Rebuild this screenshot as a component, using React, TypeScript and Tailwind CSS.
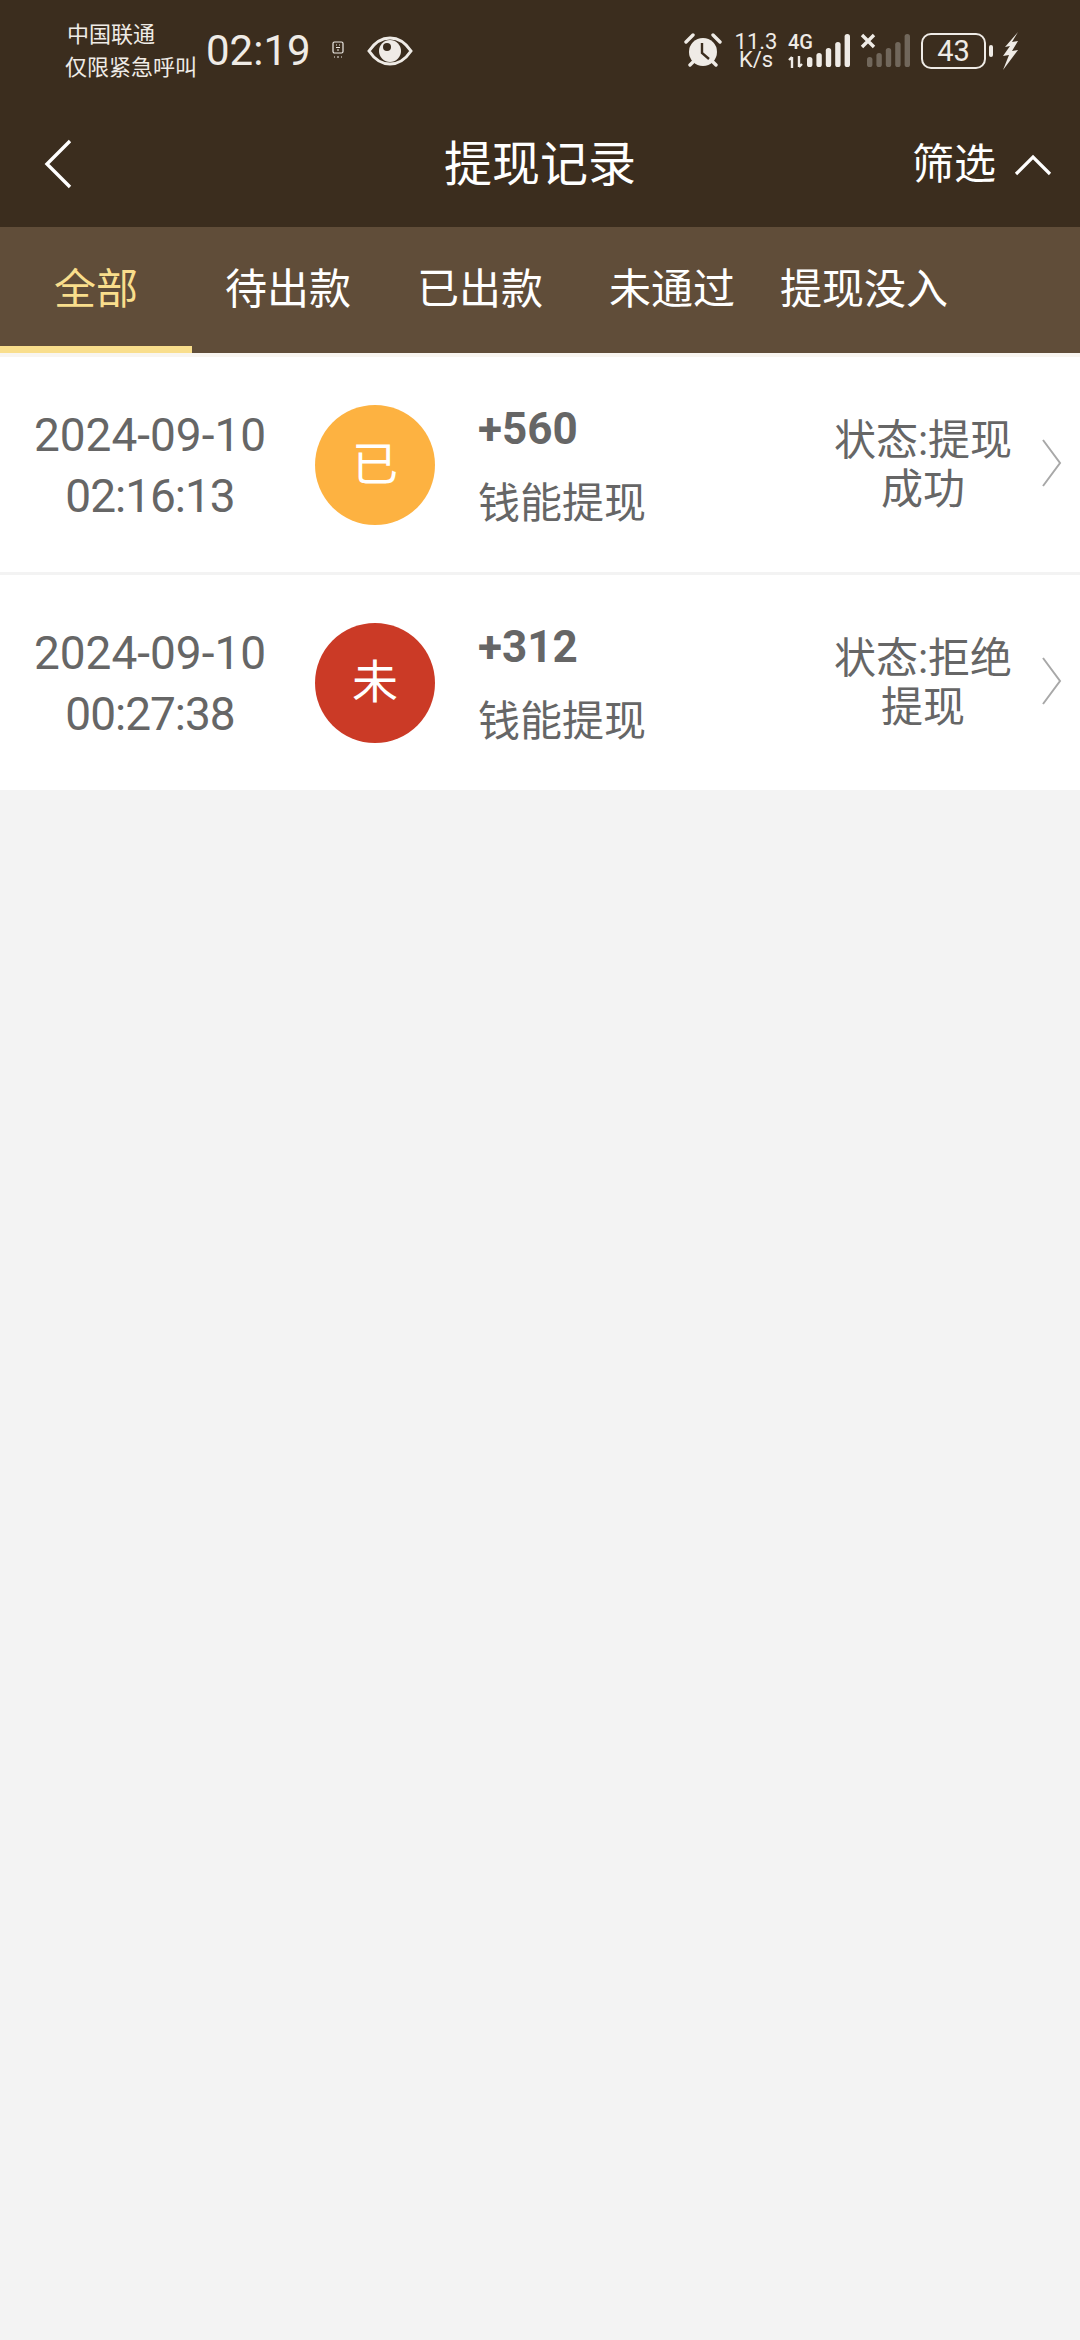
const FONT = "font-['Roboto','Noto_Sans_CJK_SC',sans-serif]";

const tabs = ["全部", "待出款", "已出款", "未通过", "提现没入"];

const records = [
  { date: "2024-09-10", time: "02:16:13", mark: "已", color: "bg-[#fdb241]", amount: "+560", status: "状态:提现", detail: "成功" },
  { date: "2024-09-10", time: "00:27:38", mark: "未", color: "bg-[#cb3a26]", amount: "+312", status: "状态:拒绝", detail: "提现" },
];

function Bars({ dim }: { dim?: boolean }) {
  const heights = [10, 14, 19, 25, 33];
  return (
    <svg width="48" height="36" viewBox="0 0 48 36" className="block">
      {heights.map((h, i) => (
        <rect key={i} x={2 + i * 9.4} y={34 - h} width="5.4" height={h} rx="2.6" fill={dim ? "#71675b" : "#efebe6"} />
      ))}
    </svg>
  );
}

function StatusBar() {
  return (
    <div className="flex h-[102px] items-center text-[#efebe6]">
      <div className="ml-[65px] w-[141px] text-[22px] leading-[33px]">
        <div className="pl-[2px]">中国联通</div>
        <div className="whitespace-nowrap">仅限紧急呼叫</div>
      </div>
      <div className="text-[42px] leading-none">02:19</div>
      <svg width="14" height="20" viewBox="0 0 14 20" className="ml-[20px]">
        <rect x="2" y="1" width="10" height="11" rx="1.5" fill="none" stroke="#efebe6" strokeWidth="1.2" />
        <path d="M5 4h1M8 4h1M5 6.5h4M7 8v2M3 16h1M6 16h2M10 16h1" stroke="#efebe6" strokeWidth="1" />
      </svg>
      <svg width="46" height="32" viewBox="0 0 46 32" className="ml-[22px]">
        <path d="M2 16C8 7 15 3 23 3s15 4 21 13c-6 9-13 13-21 13S8 25 2 16Z" fill="none" stroke="#efebe6" strokeWidth="3" />
        <circle cx="23" cy="16" r="11" fill="#efebe6" />
        <circle cx="20" cy="12" r="4" fill="#3b2d1e" />
      </svg>
      <div className="ml-auto flex items-center">
        <svg width="38" height="38" viewBox="0 0 38 38">
          <circle cx="19" cy="20" r="14" fill="#efebe6" />
          <path d="M18 11v10l7 6" fill="none" stroke="#3b2d1e" strokeWidth="2.4" />
          <path d="M2 10 9 3M36 10l-7-7M6 33l3-3M32 33l-3-3" stroke="#efebe6" strokeWidth="3.4" strokeLinecap="round" />
        </svg>
        <div className="ml-[10px] w-[48px] text-center text-[22px] leading-[18px]">
          <div>11.3</div>
          <div>K/s</div>
        </div>
        <div className="relative ml-[8px] w-[64px]">
          <span className="absolute left-0 top-[-1px] text-[20px] font-medium leading-[20px]">4G</span>
          <svg width="64" height="36" viewBox="0 0 64 36" className="block">
            <path d="M4 24v11M1 27l3-3M11 23v11M14 31l-3 3" stroke="#efebe6" strokeWidth="2.4" fill="none" />
            <g transform="translate(18 0)">
              {[10, 14, 19, 25, 33].map((h, i) => (
                <rect key={i} x={1 + i * 9.4} y={34 - h} width="5.4" height={h} rx="2.6" fill="#efebe6" />
              ))}
            </g>
          </svg>
        </div>
        <div className="relative ml-[8px] w-[56px]">
          <svg width="16" height="16" viewBox="0 0 16 16" className="absolute left-0 top-0">
            <path d="M2 2l12 12M14 2 2 14" stroke="#efebe6" strokeWidth="3.4" />
          </svg>
          <div className="pl-[5px]">
            <Bars dim />
          </div>
        </div>
        <div className="ml-[5px] flex h-[36px] w-[65px] items-center justify-center rounded-[10px] border-[2.5px] border-[#efebe6] text-[29px] leading-none">
          43
        </div>
        <div className="ml-[3px] h-[12px] w-[4px] rounded-[2px] bg-[#efebe6]" />
        <svg width="16" height="38" viewBox="0 0 16 38" className="ml-[9px] mr-[62px]">
          <path d="M16 0 3 15l5-1-7 10 6-1-6 15 15-20-6 1 6-10-6 1Z" fill="#efebe6" />
        </svg>
      </div>
    </div>
  );
}

function NavBar() {
  return (
    <div className="relative flex h-[125px] items-start justify-center">
      <svg width="30" height="50" viewBox="0 0 30 50" className="absolute left-[43px] top-[37px]">
        <path d="M27 2 4 25l23 23" fill="none" stroke="#fff" strokeWidth="3.4" />
      </svg>
      <div className="mt-[38px] text-[48px] leading-[50px] text-white">提现记录</div>
      <div className="absolute right-[28px] top-[41px] flex items-center text-white">
        <span className="text-[42px] leading-[44px]">筛选</span>
        <svg width="38" height="24" viewBox="0 0 38 24" className="ml-[18px]">
          <path d="M2 21 19 4l17 17" fill="none" stroke="#fff" strokeWidth="3.2" />
        </svg>
      </div>
    </div>
  );
}

function Tabs() {
  return (
    <div className="flex h-[126px] bg-[#604d39]">
      {tabs.map((tab, i) => (
        <div
          key={tab}
          className={`flex w-[192px] shrink-0 items-center justify-center pb-[1px] text-[42px] ${
            i === 0 ? "border-b-[7px] border-[#f9de8c] pt-[7px] text-[#f9de8c]" : "text-white"
          }`}
        >
          {tab}
        </div>
      ))}
    </div>
  );
}

function RecordRow({ record }: { record: (typeof records)[number] }) {
  return (
    <div className="flex h-[215px] items-center bg-white text-[#666666]">
      <div className="w-[300px] pt-[2px] text-center text-[46px] leading-[61px]">
        <div>{record.date}</div>
        <div className="tracking-[-1px]">{record.time}</div>
      </div>
      <div
        className={`ml-[15px] flex h-[120px] w-[120px] items-center justify-center rounded-full text-[46px] text-white ${record.color}`}
      >
        {record.mark}
      </div>
      <div className="ml-[43px] w-[340px] pt-[3px]">
        <div className="text-[44px] font-bold leading-[50px]">{record.amount}</div>
        <div className="mt-[25px] text-[42px] leading-[50px]">钱能提现</div>
      </div>
      <div className="ml-[14px] w-[182px] whitespace-nowrap pt-[1px] text-center text-[42px] leading-[49px]">
        <div>{record.status}</div>
        <div>{record.detail}</div>
      </div>
      <svg width="22" height="50" viewBox="0 0 22 50" className="ml-[27px] mb-[3px] shrink-0">
        <path d="M2 2l17 23L2 48" fill="none" stroke="#a8a8a8" strokeWidth="2" />
      </svg>
    </div>
  );
}

export default function App() {
  return (
    <div className={`flex min-h-[2340px] w-[1080px] flex-col overflow-hidden bg-[#f3f3f3] ${FONT}`}>
      <div className="bg-[#3b2d1e]">
        <StatusBar />
        <NavBar />
      </div>
      <Tabs />
      <div className="h-[4px] bg-[#f8f5f0]" />
      <div className="flex flex-col gap-[3px]">
        {records.map((record) => (
          <RecordRow key={record.time} record={record} />
        ))}
      </div>
    </div>
  );
}
